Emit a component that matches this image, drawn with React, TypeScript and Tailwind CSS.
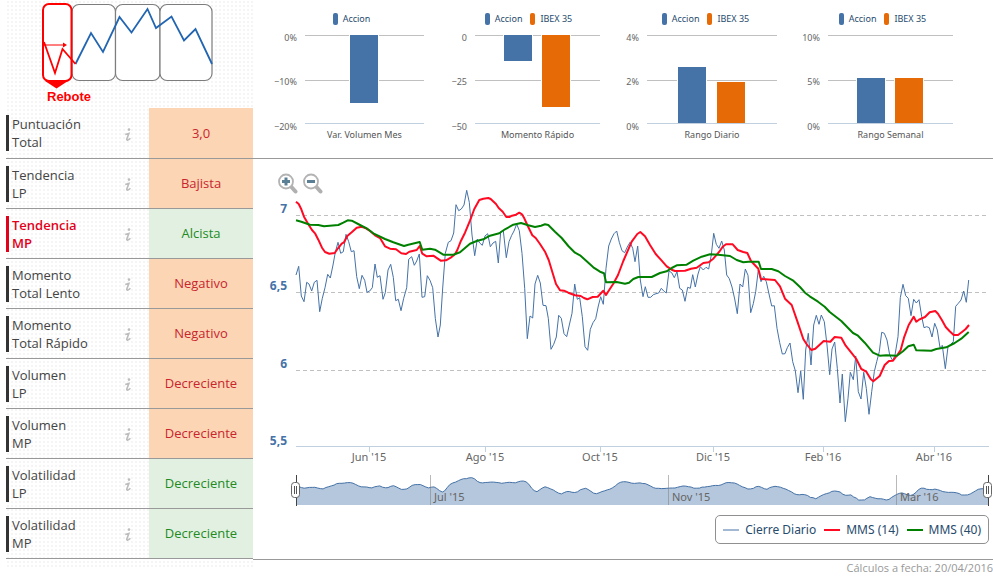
import React from "react";

type Tone = "down" | "up";

interface Indicator {
  name: [string, string];
  value: string;
  tone: Tone;
  active?: boolean;
}

const INDICATORS: Indicator[] = [
  { name: ["Puntuación", "Total"], value: "3,0", tone: "down" },
  { name: ["Tendencia", "LP"], value: "Bajista", tone: "down" },
  { name: ["Tendencia", "MP"], value: "Alcista", tone: "up", active: true },
  { name: ["Momento", "Total Lento"], value: "Negativo", tone: "down" },
  { name: ["Momento", "Total Rápido"], value: "Negativo", tone: "down" },
  { name: ["Volumen", "LP"], value: "Decreciente", tone: "down" },
  { name: ["Volumen", "MP"], value: "Decreciente", tone: "down" },
  { name: ["Volatilidad", "LP"], value: "Decreciente", tone: "up" },
  { name: ["Volatilidad", "MP"], value: "Decreciente", tone: "up" },
];

interface Bar {
  x: number;
  y: number;
  h: number;
  color: string;
}

interface BarChartData {
  title: string;
  ticks: [string, string, string];
  plot: [number, number];
  bars: Bar[];
}

const BLUE = "#4572a7";
const ORANGE = "#e66a05";

const BAR_CHARTS: BarChartData[] = [
  {
    title: "Var. Volumen Mes",
    ticks: ["0%", "−10%", "−20%"],
    plot: [52, 171],
    bars: [{ x: 97, y: 0, h: 68, color: BLUE }],
  },
  {
    title: "Momento Rápido",
    ticks: ["0", "−25", "−50"],
    plot: [45, 170],
    bars: [
      { x: 74, y: 0, h: 26, color: BLUE },
      { x: 112, y: 0, h: 72, color: ORANGE },
    ],
  },
  {
    title: "Rango Diario",
    ticks: ["4%", "2%", "0%"],
    plot: [40, 170],
    bars: [
      { x: 71, y: 32, h: 56, color: BLUE },
      { x: 110, y: 47, h: 41, color: ORANGE },
    ],
  },
  {
    title: "Rango Semanal",
    ticks: ["10%", "5%", "0%"],
    plot: [44, 169],
    bars: [
      { x: 73, y: 43, h: 45, color: BLUE },
      { x: 111, y: 43, h: 45, color: ORANGE },
    ],
  },
];

const CLOSE =
  "296,275 298.7,266.3 301.3,296 304,301.7 306.7,282.3 309,284 311.7,291 314.3,282.3 317,280.3 319.7,311.7 322.3,298.3 325,287.7 327.7,274.3 330.3,278 333,265 335.3,252.3 338,242.3 340.7,253.3 343.3,251.7 346,234.3 348.7,241.7 351.3,251.7 354,250.7 356.7,276.7 359.3,288.7 362,275.3 364.7,280.3 367,292.3 369.7,291 372.3,287.7 375,264 377.3,277.3 380,275.7 383,299.3 385.3,292.7 388,270 390.7,264.3 393.3,277.3 395.7,300.7 398.3,299.3 401,310.7 403.7,298.3 406.7,287.7 408.7,259.3 411.7,256.7 414.3,265.3 416.7,261 419.3,254 422,297.3 424.7,296.7 427.3,275.7 430,280.3 432.7,287.7 435.3,318.3 438,337 440.3,325 442.7,288 445.3,253.3 448.3,242.3 451,240.7 453.7,233 456,204.7 458.7,210.7 461.3,209 464,205 466.7,190.3 469.3,202.3 472,235 474.7,255.7 477.3,239 479.7,243 482.3,245.3 485,236 487.7,233.7 490.3,246.7 493,243 495.7,241.3 498.3,263 500.7,231.7 503.3,230.7 506.3,257.7 509,241.7 511.7,235.3 514,231 516.7,224 519.3,230.7 522,253.3 524.7,288.3 527.3,338.7 530,316 532.7,318 535,284 537.7,275.3 540.3,283 543,305.3 546,305.7 548.3,318.3 551,349.3 553.7,344.3 556.3,337 558.7,315.3 561.3,318.3 564,333.7 566.7,336.7 569.3,325 572,313.3 574.7,284 577.3,299.3 579.7,297.7 582.3,316.7 585,346.7 587.7,350.3 590.3,329.3 593,322.7 595.7,318.7 598.3,306 600.7,296.7 603.3,304.3 606,268.3 608.7,246 611.3,239 614,233.7 616.7,231 619.3,242.3 622,250.7 624.7,252.7 627.3,247 630,242.3 632.7,248.3 635,261.7 637.7,246 640.3,280 643,296.7 645.3,286.7 648,297.3 650.7,297.3 653.3,294.7 656,293.7 658.7,293 661.3,288.3 664,291.3 666.3,293 669,271 671.7,272.7 674.3,277.7 677,271.7 679.7,288.3 682.3,290 685,301.3 687.7,287.3 690.3,288.3 692.7,274.7 695.3,287 698,274 700.3,266.7 703.3,270 706,267.3 708.7,269 711.3,255 713.7,233.3 716.3,244.3 719,248.3 721.7,241 724.3,250 726.7,275 729.3,278.7 732,287 734.7,299 737.3,313.7 740,284 742.7,287 745.3,269 748,275.3 750.7,312.7 753.3,303.7 755.7,291.7 758.3,270 761,281.7 763.7,276.3 766.3,281.7 769,294 771.7,306 774.3,305.7 777,328.3 779.7,342.7 782.3,354 785,353.7 787.3,347.7 790,343 792.7,361.7 795.3,370.7 798,392.7 800.7,371 803.3,399.3 805.7,350 808.3,333.3 811,365 813.7,325 816.3,315.3 819,324.3 821.3,315 824.3,321.7 827,345 829.7,374.7 832,349 834.7,342 837.3,368.3 840,403 842.3,374 845.3,421.7 848,398.3 850.3,372.3 853.3,379.7 855.7,356 858.3,391.7 861,399 863.7,372.3 866.3,388.3 869,414.3 871.7,391.7 874.3,371.7 876.7,361.7 879.3,351.7 881.7,332.3 884.3,333.3 887,340 889.7,355 892.7,360.7 895,355 898,336.7 900.3,297.7 903,284.3 905.7,295.7 908.3,298.3 911,315.7 913.7,299.3 916.3,303 919,299.7 921.7,316.7 924,327.7 926.7,326.7 929.3,327.7 932,337 934.7,323.3 937.3,330 940,347.7 942.3,345.3 945.3,368.7 948,346.7 950.7,344.3 953.3,341.7 955.7,306.3 958.3,303.3 961,300 963.7,291 966.3,302.3 968.7,280";

const MMS14 =
  "296,201.7 298.7,204 301.3,209.3 304,216.7 308.3,224.3 312,230 315,233.3 318.3,239.7 322,247.7 325,252 329.3,253.7 334.7,253 338,248.3 341.7,243.7 344,242.3 347.3,236 351.7,232.3 356.7,227.7 361.7,226.7 366,228.3 370,231 375,235.3 380,238 385,246.3 390,248.7 396,249.3 401.3,253.3 406,254 409.3,251.7 416.7,250 419.7,246 422.3,253.7 426.7,256.3 433.3,255.7 440.7,260.7 446,260.3 450.7,257.7 455,254.3 457.3,250 461,240.7 465,232.7 470,220.7 474.3,209 479.3,200 483.3,198.7 488.3,198 490.7,199 496,204 498.7,208 502.7,211.7 506.3,217 509.3,217 512,215.7 516,214.7 519.3,212.7 522,214.3 524.3,218.3 527.3,225 532.3,235.3 535.7,238 540,244 545,251.7 548.7,260 552.7,273.3 556,284 560,290.3 564,290.7 568.3,292.7 575,295.3 580.7,296 584,298 587.3,299.3 592.7,297 597.7,296.7 603.3,290.7 606,295 608.7,290.7 613.3,283.7 618,275 623.3,261 631.7,241.7 637.3,234 640.3,232 645,236.3 650,245 655.7,254 661.7,260.7 666.7,266.3 671.7,269.7 675,271 685,270.7 691,268.7 696.7,267.7 703.3,263 708.7,262.3 713.3,258.7 719.3,251.7 722.7,246.7 726,244.3 732.7,244.3 737.7,250 743.3,252 747.3,253 751,261 758.3,268.7 761,279 775,280 780,286.3 785,298.7 791.7,305 797.7,322.3 803.3,339 806.5,344 811.3,350 815.3,348.7 823.7,341 830.3,341.7 834.7,337 841.3,337.7 845.7,345.7 851.3,352.7 856.3,359 861.3,369 866.3,371.7 870.7,379 873.3,381.3 879.7,376 884.7,365 889,361 893,360.7 897.3,355 900.7,350 904,337.7 908.7,325 913.7,316.7 916.3,321.7 919,319.7 925,317 929.7,312.3 935.3,311 938,313.7 942,320.3 945.7,327 949.7,331.3 953.7,335 958,335 962.3,331.7 965.7,329 969,325";

const MMS40 =
  "296,220.3 301.3,221.7 310,224.7 318.3,225 324,226.3 338.3,225 343.3,222.7 347.7,220.3 351.7,220.7 360,225 366.7,228.3 373.3,233.3 385,239 393.3,242.3 404,246 408.3,244.7 419.7,242 422.3,249.7 430,248.7 435,249.7 443.3,254.7 453.3,254.7 460,252.3 470,243.7 476.7,241 483.3,239.3 490,235.7 499.3,233.3 505,229.3 513.3,224.7 521,223 528.3,225.3 535,227 541,225.7 545,224.3 548.3,225 555,231.7 561.7,238 568.3,246 575,252.7 580,255.3 586.7,261.3 593.3,267.3 600,271.7 604,273.3 606,282.3 616.7,282 625,283.7 629,282.7 633.3,279 638.3,277 651.7,277 660,273 666.7,271.3 671.7,268 676.7,265.3 686.7,264.7 693.3,260.7 701.7,256.7 710,254.3 718.3,254.7 730,256 736.7,260 743.3,262.3 748.3,261.7 758.7,261.7 761,269 771.7,269 778.3,271.3 785,276 793.3,280.7 800,287 805,292.7 809.7,296.3 818,301.7 824.7,306.7 829.7,312 841.3,321 853,333 858,335.7 864.7,342.7 873,352.7 879.7,355.7 886.3,355.3 897,355.7 903,351.3 908.3,346.3 913.7,344.7 916.3,350.3 931.3,350.7 936.3,349 946.3,347.3 954.7,343 961.3,338.7 968.7,332";

// The navigator repeats the closing price, averaged over neighbours and scaled down.
const closePoints = CLOSE.split(" ").map((p) => p.split(",").map(Number));
const navLine = closePoints
  .map(([x], i) => {
    const near = closePoints.slice(Math.max(0, i - 1), i + 2);
    const mean = near.reduce((sum, p) => sum + p[1], 0) / near.length;
    const nx = 296 + (x - 296) * 1.03;
    const ny = 477 + (mean - 193) * 0.112;
    return `${nx.toFixed(1)},${ny.toFixed(1)}`;
  })
  .join(" ");

const Y_AXIS = [
  { label: "7", y: 215, base: 213 },
  { label: "6,5", y: 292, base: 290 },
  { label: "6", y: 370, base: 368 },
  { label: "5,5", y: 446, base: 445 },
];

const X_AXIS = [
  { label: "Jun '15", x: 369 },
  { label: "Ago '15", x: 485 },
  { label: "Oct '15", x: 600 },
  { label: "Dic '15", x: 713 },
  { label: "Feb '16", x: 823 },
  { label: "Abr '16", x: 934 },
];

const NAV_AXIS = [
  { label: "Jul '15", x: 430 },
  { label: "Nov '15", x: 668 },
  { label: "Mar '16", x: 896 },
];

function PhaseDiagram() {
  return (
    <svg
      className="block h-[108px] w-[247px]"
      viewBox="6 0 247 108"
      fill="none"
      role="img"
      aria-label="Fase: Rebote"
    >
      <g stroke="#7d7d7d" strokeWidth="1.2">
        <rect x="72" y="4.5" width="43.5" height="76" rx="7" fill="#fff" />
        <rect x="115.5" y="4.5" width="44.5" height="76" rx="7" fill="#fff" />
        <rect x="160" y="4.5" width="52" height="76" rx="7" fill="#fff" />
      </g>
      <polyline
        points="75.5,64 91,33 103,52 119.5,17 131.5,32.5 147.5,9 156,28 171.5,16.5 184,40.5 195.5,29 212,64"
        stroke="#2265b0"
        strokeWidth="1.8"
      />
      <rect x="43" y="4" width="28.5" height="77" rx="6" fill="#fff" stroke="#f00" strokeWidth="2" />
      <polyline points="44,42 55,73 62.5,49 75.5,64" stroke="#f00" strokeWidth="1.8" />
      <path d="M44 45H65" stroke="#f00" />
      <path d="M63 42.5L67 45L63 47.5Z" fill="#f00" />
      <path d="M45 81H68L56.5 88.5Z" fill="#f00" />
      <text
        x="47"
        y="101"
        fill="#f00"
        className="font-['Liberation_Sans',sans-serif] text-[13px] font-bold"
      >
        Rebote
      </text>
    </svg>
  );
}

function InfoIcon() {
  return (
    <svg viewBox="0 0 8 14" className="h-[14px] w-[8px]" aria-hidden="true">
      <circle cx="5" cy="1.6" r="1.3" fill="#bdbdbd" />
      <path
        d="M1.2 6.6L4.9 5.4L2.8 11C2.6 12 3 12.3 3.8 12C4.8 11.6 5.6 11 6.4 10.2"
        fill="none"
        stroke="#bdbdbd"
        strokeWidth="1.6"
      />
    </svg>
  );
}

function IndicatorTable() {
  return (
    <table className="w-full border-collapse text-[13px] leading-[18px]">
      <tbody>
        {INDICATORS.map((row) => (
          <tr key={row.name.join(" ")} className="h-[50px] border-b border-[#999]">
            <th scope="row" className="p-0 text-left align-top font-normal">
              <div
                className={`mt-[7px] h-9 border-l-3 pl-[3px] ${
                  row.active ? "border-[#e2001a] font-semibold text-[#e2001a]" : "border-[#333] text-[#444]"
                }`}
              >
                {row.name[0]}
                <br />
                {row.name[1]}
              </div>
            </th>
            <td className="w-[25px] p-0">
              <button type="button" aria-label={`Información: ${row.name.join(" ")}`} className="block pt-1">
                <InfoIcon />
              </button>
            </td>
            <td
              className={`w-[104px] p-0 text-center ${
                row.tone === "up" ? "bg-[#e2f0e2] text-[#228b22]" : "bg-[#fcd5b4] text-[#c9252d]"
              }`}
            >
              {row.value}
            </td>
          </tr>
        ))}
      </tbody>
    </table>
  );
}

function BarLegendItem({ label, swatch }: { label: string; swatch: string }) {
  return (
    <button type="button" className="flex items-center gap-[5px] text-[#274b6d]">
      <span className={`h-3 w-[5px] rounded-[2px] ${swatch}`} />
      {label}
    </button>
  );
}

function BarChart({ data }: { data: BarChartData }) {
  const [left, right] = data.plot;
  return (
    <figure className="w-[177px] font-['Noto_Sans',sans-serif] text-[9px]">
      <div className="flex h-[35px] items-center justify-center gap-2 pt-0.5 pl-5 leading-3">
        <BarLegendItem label="Accion" swatch="bg-[#4572a7]" />
        {data.bars.length > 1 && <BarLegendItem label="IBEX 35" swatch="bg-[#e66a05]" />}
      </div>
      <svg
        className="block h-[108px] w-full overflow-visible"
        viewBox="0 0 177 108"
        role="img"
        aria-label={data.title}
      >
        {[0, 45, 88].map((y, i) => (
          <g key={y}>
            <rect x={left} y={y} width={right - left} height="1" fill={i === 2 ? "#c0d0e0" : "#c0c0c0"} />
            <text x={left - 8} y={[6, 50, 95][i]} textAnchor="end" fill="#666">
              {data.ticks[i]}
            </text>
          </g>
        ))}
        {data.bars.map((bar) => (
          <g key={bar.x}>
            <rect x={bar.x - 1} y={bar.y} width="30" height={bar.h} fill="#fff" />
            <rect x={bar.x} y={bar.y} width="28" height={bar.h} fill={bar.color} />
          </g>
        ))}
        <text x={(left + right) / 2} y="103" textAnchor="middle" fill="#555">
          {data.title}
        </text>
      </svg>
    </figure>
  );
}

function ZoomButton({ label, plus }: { label: string; plus?: boolean }) {
  return (
    <button type="button" aria-label={label}>
      <svg viewBox="0 0 20 21" className="block h-[21px] w-5" fill="none">
        <path d="M13 13.5L17.5 18.5" stroke="#b0b0b0" strokeWidth="4" strokeLinecap="round" />
        <circle cx="8" cy="8.5" r="7" fill="#fff" stroke="#b3b3b3" strokeWidth="1.8" />
        <path d={plus ? "M4 8.5H12M8 4.5V12.5" : "M4 8.5H12"} stroke="#5b7f95" strokeWidth="3" />
      </svg>
    </button>
  );
}

function NavHandle({ x }: { x: number }) {
  return (
    <g>
      <rect x={x} y="475" width="1" height="31" fill="#444" />
      <rect x={x - 4.5} y="482.5" width="8" height="15" rx="3" fill="#fff" stroke="#666" />
      <path d={`M${x - 1.5} 486V494M${x + 0.5} 486V494`} stroke="#555" />
    </g>
  );
}

function PriceChart() {
  return (
    <div className="relative">
      <div className="absolute top-[14px] left-[25px] flex gap-[5px]">
        <ZoomButton label="Acercar" plus />
        <ZoomButton label="Alejar" />
      </div>
      <svg
        className="block w-full font-['Noto_Sans',sans-serif]"
        viewBox="253 159 740 348"
        fill="none"
        role="img"
        aria-label="Cierre diario y medias móviles"
      >
        {Y_AXIS.map(({ label, y, base }, i) => (
          <g key={label}>
            <path
              d={`M296 ${y + 0.5}H989`}
              stroke={i === 3 ? "#c0d0e0" : "#c0c0c0"}
              strokeDasharray={i === 3 ? undefined : "4 3"}
            />
            <text x="287" y={base} textAnchor="end" fill="#4572a7" className="text-[12px] font-bold">
              {label}
            </text>
          </g>
        ))}
        {X_AXIS.map(({ label, x }) => (
          <g key={label}>
            <rect x={x} y="446" width="1" height="6" fill="#c0d0e0" />
            <text x={x} y="461" textAnchor="middle" fill="#666" className="text-[11px]">
              {label}
            </text>
          </g>
        ))}
        <polyline points={CLOSE} stroke="#4572a7" strokeWidth="1" strokeLinejoin="round" />
        <polyline points={MMS14} stroke="#ff0a22" strokeWidth="2" strokeLinejoin="round" />
        <polyline points={MMS40} stroke="#008000" strokeWidth="2" strokeLinejoin="round" />

        <polygon points={`296,505 ${navLine} 989,505`} fill="#b5c7dc" />
        <polyline points={navLine} stroke="#4572a7" strokeWidth="1" />
        {NAV_AXIS.map(({ label, x }) => (
          <g key={label}>
            <rect x={x} y="475" width="1" height="30" fill="#808080" fillOpacity="0.55" />
            <text x={x + 4} y="501" fill="#666" className="text-[11px]">
              {label}
            </text>
          </g>
        ))}
        <NavHandle x={296} />
        <NavHandle x={988} />
      </svg>
    </div>
  );
}

function SeriesLegendItem({ label, line }: { label: string; line: string }) {
  return (
    <button type="button" className="flex items-center gap-1.5 text-[#274b6d]">
      <span className={`h-0.5 w-4 ${line}`} />
      {label}
    </button>
  );
}

export default function App() {
  return (
    <div className="flex overflow-hidden bg-white font-['Open_Sans','Noto_Sans',sans-serif]">
      <aside className="w-[253px] shrink-0 pl-1.5">
        <div className="bg-[radial-gradient(circle,#f5f5f5_1px,transparent_1px)] bg-size-[4px_4px] pb-[10px]">
          <PhaseDiagram />
          <IndicatorTable />
        </div>
      </aside>
      <main className="min-w-0 flex-1">
        <section className="flex h-[159px] justify-between border-b border-[#999] pr-8">
          {BAR_CHARTS.map((data) => (
            <BarChart key={data.title} data={data} />
          ))}
        </section>
        <section className="border-b border-[#999] pb-[15px]">
          <PriceChart />
          <div className="mt-2 mr-1 flex justify-end">
            <div className="flex h-[29px] items-center gap-2 rounded-[5px] border border-[#909090] px-[7px] font-['Noto_Sans',sans-serif] text-[12px]">
              <SeriesLegendItem label="Cierre Diario" line="bg-[#a2b8d3]" />
              <SeriesLegendItem label="MMS (14)" line="bg-[#ff0a22]" />
              <SeriesLegendItem label="MMS (40)" line="bg-[#008000]" />
            </div>
          </div>
        </section>
        <p className="text-right text-[11px] leading-4 text-[#999]">Cálculos a fecha: 20/04/2016</p>
      </main>
    </div>
  );
}
